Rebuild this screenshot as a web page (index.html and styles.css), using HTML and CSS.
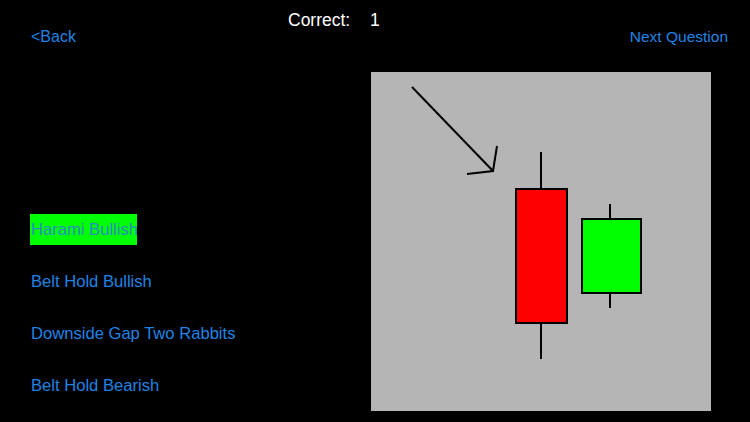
FILE: index.html
```html
<!DOCTYPE html>
<html>
<head>
<meta charset="utf-8">
<link rel="stylesheet" href="styles.css">
</head>
<body>
<div class="header">
  <div class="score"><span class="score-label">Correct:</span><span class="score-value">1</span></div>
  <div class="nav">
    <span class="link">&lt;Back</span>
    <span class="link next">Next Question</span>
  </div>
</div>
<div class="main">
  <div class="options">
    <div class="option selected">Harami Bullish</div>
    <div class="option">Belt Hold Bullish</div>
    <div class="option">Downside Gap Two Rabbits</div>
    <div class="option">Belt Hold Bearish</div>
  </div>
  <div class="chart">
    <svg class="chart-svg" width="340" height="339" viewBox="0 0 340 339">
      <g stroke="#000" stroke-width="2" fill="none" stroke-linecap="butt">
        <line x1="41" y1="15" x2="122" y2="99"/>
        <polyline points="126,74 122,99 96,102"/>
        <line x1="170" y1="80" x2="170" y2="117"/>
        <line x1="170" y1="251" x2="170" y2="287"/>
        <line x1="239" y1="132" x2="239" y2="147"/>
        <line x1="239" y1="221" x2="239" y2="236"/>
      </g>
      <rect x="145" y="117" width="51" height="134" fill="#ff0000" stroke="#000" stroke-width="2"/>
      <rect x="211" y="147" width="59" height="74" fill="#00ff00" stroke="#000" stroke-width="2"/>
    </svg>
  </div>
</div>
</body>
</html>
```
FILE: styles.css
```css
html, body {
  margin: 0;
  padding: 0;
  background: #000;
  width: 750px;
  height: 422px;
  overflow: hidden;
  font-family: "Liberation Sans", Arial, sans-serif;
}
.header {
  height: 72px;
  box-sizing: border-box;
  padding-top: 12px;
}
.score {
  padding-left: 288px;
  height: 17px;
  line-height: 17px;
  font-size: 17.5px;
  color: #fff;
  display: flex;
}
.score-label {
  width: 82px;
}
.nav {
  display: flex;
  justify-content: space-between;
  align-items: baseline;
  padding: 0 22px 0 31px;
  height: 16px;
  line-height: 16px;
}
.link {
  color: #1f84e6;
  font-size: 16px;
}
.link.next {
  font-size: 15.5px;
}
.main {
  display: flex;
}
.options {
  width: 340px;
  padding-left: 31px;
  padding-top: 142px;
  display: flex;
  flex-direction: column;
  gap: 21px;
  align-items: flex-start;
}
.option {
  height: 31px;
  line-height: 32px;
  font-size: 16.6px;
  color: #1f84e6;
  white-space: nowrap;
}
.option.selected {
  background: #00ff00;
  color: #2a8cc4;
  width: 107px;
  margin-left: -1px;
  padding-left: 1px;
  box-sizing: border-box;
  overflow: hidden;
}
.chart {
  width: 340px;
  height: 339px;
  background: #b5b5b5;
}
.chart-svg {
  display: block;
}
```
